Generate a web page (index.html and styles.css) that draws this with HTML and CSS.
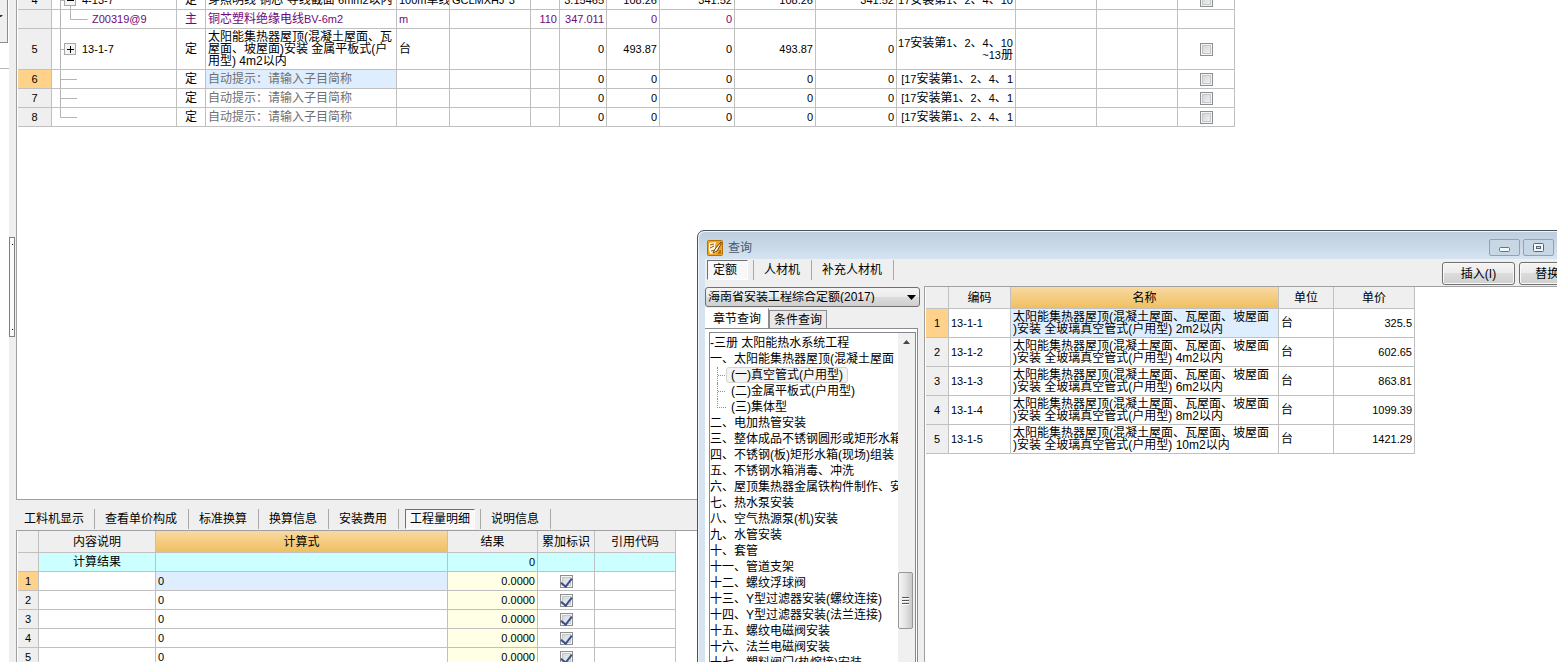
FILE: index.html
```html
<!DOCTYPE html>
<html lang="zh-CN">
<head>
<meta charset="utf-8">
<title>查询</title>
<link rel="stylesheet" href="styles.css">
</head>
<body>
<div class="app">
  <aside class="dock">
    <div class="dock-head"><svg width="3" height="4" viewBox="0 0 3 4"><path d="M0 1h3L1 3H0z" fill="#333"/></svg></div>
    <div class="dock-gap"></div>
  </aside>
  <div class="splitter"><div class="grip"><i></i><i></i></div></div>
  <main class="main">
    <section class="upper">
      <table class="grid items" aria-label="子目">
        <colgroup><col class="w34"><col class="w125"><col class="w29"><col class="w191"><col class="w53"><col class="w81"><col class="w29"><col class="w47"><col class="w53"><col class="w75"><col class="w81"><col class="w81"><col class="w119"><col class="w81"><col class="w81"><col class="w57"></colgroup>
        <tbody>
        <tr><th>4</th><td><div class="node"><svg width="30" height="18" viewBox="0 0 30 18"><path d="M8.500 0V18M9 9.500h4M18.500 15v3" class="ln"/><rect x="12.500" y="3.500" width="11" height="11" class="bx"/><path d="M15 9.500h7" class="sg"/></svg>4-13-7</div></td><td class="c">定</td><td class="l">穿照明线 铜芯 导线截面 <span class="n">6mm2</span>以内</td><td class="l"><span class="n">100m</span>单线</td><td class="l"><span class="n">GCLMXHJ*3</span></td><td></td><td>3.15465</td><td>108.26</td><td>341.52</td><td>108.26</td><td>341.52</td><td class="book"><span class="n">17</span>安装第<span class="n">1</span>、<span class="n">2</span>、<span class="n">4</span>、<span class="n">10</span></td><td></td><td></td><td class="c"><input type="checkbox" aria-label="选择 4"></td></tr>
        <tr class="mat"><th></th><td><div class="node"><svg width="40" height="18" viewBox="0 0 40 18"><path d="M8.500 0V18M18.500 0v9.500h17" class="ln"/></svg><span class="code">Z00319@9</span></div></td><td class="c">主</td><td class="l">铜芯塑料绝缘电线<span class="n">BV-6m2</span></td><td class="l"><span class="n">m</span></td><td></td><td>110</td><td>347.011</td><td>0</td><td>0</td><td></td><td></td><td></td><td></td><td></td><td></td></tr>
        <tr class="tall"><th>5</th><td><div class="node"><svg width="30" height="40" viewBox="0 0 30 40"><path d="M8.500 0V40M9 20.500h4" class="ln"/><rect x="12.500" y="14.500" width="11" height="11" class="bx"/><path d="M15 20.500h7M18.500 17v7" class="sg"/></svg>13-1-7</div></td><td class="c">定</td><td class="l">太阳能集热器屋顶(混凝土屋面、瓦<br>屋面、坡屋面)安装 金属平板式(户<br>用型) 4m2以内</td><td class="l">台</td><td></td><td></td><td>0</td><td>493.87</td><td>0</td><td>493.87</td><td>0</td><td class="book"><span class="n">17</span>安装第<span class="n">1</span>、<span class="n">2</span>、<span class="n">4</span>、<span class="n">10</span><br><span class="n">~13</span>册</td><td></td><td></td><td class="c"><input type="checkbox" aria-label="选择 5"></td></tr>
        <tr><th class="cur">6</th><td><div class="node"><svg width="30" height="18" viewBox="0 0 30 18"><path d="M8.500 0V18M9 9.500h16" class="ln"/></svg></div></td><td class="c">定</td><td class="l hint sel">自动提示：请输入子目简称</td><td></td><td></td><td></td><td>0</td><td>0</td><td>0</td><td>0</td><td>0</td><td class="book"><span class="n">[17</span>安装第<span class="n">1</span>、<span class="n">2</span>、<span class="n">4</span>、<span class="n">1</span></td><td></td><td></td><td class="c"><input type="checkbox" aria-label="选择 6"></td></tr>
        <tr><th>7</th><td><div class="node"><svg width="30" height="18" viewBox="0 0 30 18"><path d="M8.500 0V18M9 9.500h16" class="ln"/></svg></div></td><td class="c">定</td><td class="l hint">自动提示：请输入子目简称</td><td></td><td></td><td></td><td>0</td><td>0</td><td>0</td><td>0</td><td>0</td><td class="book"><span class="n">[17</span>安装第<span class="n">1</span>、<span class="n">2</span>、<span class="n">4</span>、<span class="n">1</span></td><td></td><td></td><td class="c"><input type="checkbox" aria-label="选择 7"></td></tr>
        <tr><th>8</th><td><div class="node"><svg width="30" height="18" viewBox="0 0 30 18"><path d="M8.500 0V9.500h16.500" class="ln"/></svg></div></td><td class="c">定</td><td class="l hint">自动提示：请输入子目简称</td><td></td><td></td><td></td><td>0</td><td>0</td><td>0</td><td>0</td><td>0</td><td class="book"><span class="n">[17</span>安装第<span class="n">1</span>、<span class="n">2</span>、<span class="n">4</span>、<span class="n">1</span></td><td></td><td></td><td class="c"><input type="checkbox" aria-label="选择 8"></td></tr>
        </tbody>
      </table>
    </section>
    <section class="lower">
      <nav class="tabs">
        <button>工料机显示</button><button>查看单价构成</button><button>标准换算</button><button>换算信息</button><button>安装费用</button><button class="on"><span>工程量明细</span></button><button>说明信息</button>
      </nav>
      <div class="lower-body">
      <table class="grid calc">
        <colgroup><col class="w21"><col class="w117"><col class="w292"><col class="w90"><col class="w57"><col class="w81"></colgroup>
        <thead><tr><th></th><th>内容说明</th><th class="hot">计算式</th><th>结果</th><th>累加标识</th><th>引用代码</th></tr></thead>
        <tbody>
        <tr class="sum"><th></th><td class="c">计算结果</td><td></td><td>0</td><td></td><td></td></tr>
        <tr><th class="cur">1</th><td></td><td class="l sel"><span class="n">0</span></td><td class="res">0.0000</td><td class="c"><input type="checkbox" checked aria-label="累加 1"></td><td></td></tr>
        <tr><th>2</th><td></td><td class="l"><span class="n">0</span></td><td class="res">0.0000</td><td class="c"><input type="checkbox" checked aria-label="累加 2"></td><td></td></tr>
        <tr><th>3</th><td></td><td class="l"><span class="n">0</span></td><td class="res">0.0000</td><td class="c"><input type="checkbox" checked aria-label="累加 3"></td><td></td></tr>
        <tr><th>4</th><td></td><td class="l"><span class="n">0</span></td><td class="res">0.0000</td><td class="c"><input type="checkbox" checked aria-label="累加 4"></td><td></td></tr>
        <tr><th>5</th><td></td><td class="l"><span class="n">0</span></td><td class="res">0.0000</td><td class="c"><input type="checkbox" checked aria-label="累加 5"></td><td></td></tr>
        </tbody>
      </table>
      </div>
    </section>
  </main>

  <div class="dialog" role="dialog" aria-label="查询">
    <header class="title">
      <svg class="logo" width="16" height="16" viewBox="0 0 16 16"><rect x=".5" y=".5" width="15" height="15" rx="1" fill="#f2a51c" stroke="#b4700c"/><path d="M2 3l7-1-1 4 1 7-6 1-1-4z" fill="#fff7dc"/><path d="M3 5l4-1M3 8l4-2M4 11l4-1" stroke="#8a5a10" fill="none"/><path d="M14 2L8 9l-2 4 4-2 4-7z" fill="#fff" stroke="#6b3c06"/><path d="M11 13h3M12 11h2" stroke="#7a4508"/></svg>
      <h1>查询</h1>
      <div class="winbtns">
        <button aria-label="最小化"><svg width="12" height="8" viewBox="0 0 12 8"><rect x=".5" y="3.500" width="10" height="4" rx="1" fill="#f4f7fa" stroke="#667382"/></svg></button>
        <button aria-label="最大化"><svg width="12" height="10" viewBox="0 0 12 10"><rect x=".5" y=".5" width="10" height="8" rx="1" fill="#f4f7fa" stroke="#566474"/><rect x="3.500" y="3.500" width="4" height="2" fill="#cfd9e4" stroke="#566474"/></svg></button>
        <button class="close" aria-label="关闭"></button>
      </div>
    </header>
    <div class="body">
      <div class="bar">
        <nav class="tabs top"><button class="on"><span>定额</span></button><button>人材机</button><button>补充人材机</button></nav>
        <div class="actions"><button>插入(I)</button><button>替换(R)</button></div>
      </div>
      <div class="cols">
        <div class="side">
          <div class="combo"><select aria-label="定额库"><option>海南省安装工程综合定额(2017)</option></select><svg width="9" height="5" viewBox="0 0 9 5"><path d="M0 0h9L4.500 5z"/></svg></div>
          <div class="pages"><button class="on">章节查询</button><button>条件查询</button></div>
          <div class="page">
            <div class="tree">
              <ul>
                <li>-三册 太阳能热水系统工程</li>
                <li>一、太阳能集热器屋顶(混凝土屋面
                  <ul>
                    <li><span class="picked">(一)真空管式(户用型)</span></li>
                    <li><span>(二)金属平板式(户用型)</span></li>
                    <li><span>(三)集体型</span></li>
                  </ul>
                </li>
                <li>二、电加热管安装</li>
                <li>三、整体成品不锈钢圆形或矩形水箱</li>
                <li>四、不锈钢(板)矩形水箱(现场)组装</li>
                <li>五、不锈钢水箱消毒、冲洗</li>
                <li>六、屋顶集热器金属铁构件制作、安</li>
                <li>七、热水泵安装</li>
                <li>八、空气热源泵(机)安装</li>
                <li>九、水管安装</li>
                <li>十、套管</li>
                <li>十一、管道支架</li>
                <li>十二、螺纹浮球阀</li>
                <li>十三、Y型过滤器安装(螺纹连接)</li>
                <li>十四、Y型过滤器安装(法兰连接)</li>
                <li>十五、螺纹电磁阀安装</li>
                <li>十六、法兰电磁阀安装</li>
                <li>十七、塑料阀门(热熔接)安装</li>
              </ul>
              <div class="scroll">
                <svg width="7" height="4" viewBox="0 0 7 4"><path d="M3.500 0L7 4H0z" fill="#444"/></svg>
                <div class="thumb"><i></i><i></i><i></i></div>
              </div>
            </div>
          </div>
        </div>
        <div class="result">
          <table class="grid quota">
            <colgroup><col class="w23"><col class="w62"><col class="w268"><col class="w55"><col class="w81"></colgroup>
            <thead><tr><th></th><th>编码</th><th class="hot">名称</th><th>单位</th><th>单价</th></tr></thead>
            <tbody>
            <tr><th class="cur">1</th><td class="l"><span class="n">13-1-1</span></td><td class="l sel">太阳能集热器屋顶(混凝土屋面、瓦屋面、坡屋面<br>)安装 全玻璃真空管式(户用型) 2m2以内</td><td class="l">台</td><td>325.5</td></tr>
            <tr><th>2</th><td class="l"><span class="n">13-1-2</span></td><td class="l">太阳能集热器屋顶(混凝土屋面、瓦屋面、坡屋面<br>)安装 全玻璃真空管式(户用型) 4m2以内</td><td class="l">台</td><td>602.65</td></tr>
            <tr><th>3</th><td class="l"><span class="n">13-1-3</span></td><td class="l">太阳能集热器屋顶(混凝土屋面、瓦屋面、坡屋面<br>)安装 全玻璃真空管式(户用型) 6m2以内</td><td class="l">台</td><td>863.81</td></tr>
            <tr><th>4</th><td class="l"><span class="n">13-1-4</span></td><td class="l">太阳能集热器屋顶(混凝土屋面、瓦屋面、坡屋面<br>)安装 全玻璃真空管式(户用型) 8m2以内</td><td class="l">台</td><td>1099.39</td></tr>
            <tr><th>5</th><td class="l"><span class="n">13-1-5</span></td><td class="l">太阳能集热器屋顶(混凝土屋面、瓦屋面、坡屋面<br>)安装 全玻璃真空管式(户用型) 10m2以内</td><td class="l">台</td><td>1421.29</td></tr>
            </tbody>
          </table>
        </div>
      </div>
    </div>
  </div>
</div>
</body>
</html>
```

FILE: styles.css
```css
* { box-sizing: border-box; }
body { margin: 0; }
body, button, select {
  font-family: "Liberation Sans", "Noto Sans CJK SC", sans-serif;
  font-size: 12px;
  line-height: 12px;
  color: #000;
}
button { margin: 0; padding: 0; border: 0; background: none; white-space: nowrap; }
ul { list-style: none; margin: 0; padding: 0; }
svg { display: block; flex: none; }

.app { position: relative; display: flex; height: 100vh; overflow: hidden; background: #fff; }

/* left dock and splitter */
.dock { flex: 0 0 9px; background: #fff; }
.dock-head { height: 43px; margin-right: 1px; padding-top: 14px; background: #efefef; border: solid #8c8c8c; border-width: 0 1px 1px 0; }
.dock-gap { height: 26px; border-bottom: 1px solid #b8b8b8; }
.splitter { flex: 0 0 7px; padding-top: 237px; background: #efefef; }
.grip { display: flex; flex-direction: column; justify-content: space-between; height: 100px; width: 6px; padding: 6px 2px; border: 1px solid #808080; background: #fafafa; }
.grip i { width: 1px; height: 1px; background: #000; }

.main { flex: 1; min-width: 0; display: flex; flex-direction: column; }
.upper { flex: 1; min-height: 0; overflow: hidden; padding-left: 1px; border: solid #a0a0a0; border-width: 0 0 1px 1px; }
.items { margin-top: -9px; }
.lower { flex: 0 0 162px; overflow: hidden; display: flex; flex-direction: column; background: #efefef; }
.lower-body { flex: 1; min-height: 0; overflow: hidden; padding-left: 1px; border: solid #a0a0a0; border-width: 1px 0 0 1px; background: #fff; }

/* grids */
.grid { border-collapse: separate; border-spacing: 0; table-layout: fixed; width: 1px; }
.grid td, .grid th { height: 19px; padding: 0 2px; border: solid #c0c0c0; border-width: 0 1px 1px 0; font-weight: normal; white-space: nowrap; overflow: hidden; }
.grid td { text-align: right; font-size: 11px; }
.grid td.l { text-align: left; font-size: 12px; }
.grid td.c { text-align: center; font-size: 12px; }
.grid th { background: #efefef; text-align: center; }
.grid tbody th { font-size: 11px; }
.grid thead th { height: 22px; }
.grid thead th.hot { background: linear-gradient(#f8d9a2, #f0c060); }
.grid tbody th.cur { background: #ffd28c; }
.grid td.sel { background: #dfeeff; }
.grid td.hint { color: #707070; }
.grid td.res { background: #ffffe6; }
.grid td.book { font-size: 12px; padding: 0 2px 0 1px; }
.grid .tall td, .grid .tall th { height: 41px; }
.grid .mat td { color: #6e0a78; }
.grid .sum td { background: #ccffff; }
.quota tbody td, .quota tbody th { height: 29px; }
.grid.items td:nth-child(2) { padding: 0; }
.n { font-size: 11px; }
.node { display: flex; align-items: center; font-size: 11px; }
.ln { fill: none; stroke: #b4b4b4; }
.bx { fill: #f4f4f4; stroke: #a8a8a8; }
.sg { stroke: #000; }
.w21 { width: 21px; } .w23 { width: 23px; } .w29 { width: 29px; } .w34 { width: 34px; }
.w47 { width: 47px; } .w53 { width: 53px; } .w55 { width: 55px; } .w57 { width: 57px; }
.w62 { width: 62px; } .w75 { width: 75px; } .w81 { width: 81px; } .w90 { width: 90px; }
.w117 { width: 117px; } .w119 { width: 119px; } .w125 { width: 125px; } .w191 { width: 191px; }
.w268 { width: 268px; } .w292 { width: 292px; }

input[type="checkbox"] { appearance: none; display: grid; place-items: start center; width: 13px; height: 13px; margin: 0 auto; border: 1px solid #8e8f8f; background: linear-gradient(135deg, #cfd1d3, #f6f6f6); box-shadow: inset 0 0 0 1px #f4f4f4, inset 0 0 0 2px #c4c8cc; }
input[type="checkbox"]:checked::after { content: ""; width: 5px; height: 9px; border: solid #3d4f8f; border-width: 0 2px 2px 0; transform: rotate(38deg); }

/* flat tabs */
.tabs { display: flex; align-items: center; height: 30px; padding-top: 7px; }
.tabs button { height: 20px; padding: 0 11px 0 10px; border-right: 1px solid #a8a8a8; }
.tabs button:first-child { padding: 0 10px 0 8px; }
.tabs .on { padding: 0 5px 0 6px; }
.tabs .on span { display: block; height: 20px; padding: 3px 4px 0; border: 1px solid; border-color: #707070 #fff #fff #707070; background: #f8f8f8; }

/* query window */
.dialog { position: absolute; left: 697px; right: -48px; top: 230px; bottom: -8px; display: flex; flex-direction: column; padding: 0 7px; border: 1px solid #4a545f; border-radius: 7px 7px 0 0; background: linear-gradient(#bccddd, #d6e3f0 28px, #d6e3f0); box-shadow: inset 1px 1px 0 #edf3f9; }
.title { display: flex; align-items: center; gap: 5px; height: 28px; padding: 5px 0 0 2px; }
.title h1 { flex: 1; margin: 0; font-size: 12px; font-weight: normal; color: #44586c; }
.winbtns { display: flex; gap: 3px; }
.winbtns button { display: flex; align-items: center; justify-content: center; width: 31px; height: 17px; border: 1px solid #8fa3b8; border-radius: 2px; background: #c8d7e6; }
.winbtns button.close { width: 40px; border-color: #5a6e88; }
.body { flex: 1; min-height: 0; display: flex; flex-direction: column; background: #efefef; }
.bar { display: flex; justify-content: space-between; height: 27px; }
.tabs.top { height: 27px; padding: 0 0 5px 2px; }
.tabs.top .on { padding: 0 5px 0 0; }
.tabs.top .on span { width: 41px; text-align: left; padding-left: 5px; }
.actions { display: flex; gap: 4px; padding: 3px 5px 0 0; }
.actions button { width: 73px; height: 23px; border: 1px solid #707070; border-radius: 3px; background: linear-gradient(#f4f4f4, #ebebeb 50%, #dcdcdc 50%, #cfcfcf); box-shadow: inset 0 0 0 1px #fafafa; }
.cols { flex: 1; min-height: 0; display: flex; gap: 4px; }
.side { flex: 0 0 215px; min-width: 0; display: flex; flex-direction: column; padding-top: 1px; }
.combo { position: relative; }
.combo select { display: block; appearance: none; width: 100%; height: 20px; padding: 0 2px; border: 1px solid #707070; border-radius: 3px; background: linear-gradient(#f4f4f4, #ebebeb 50%, #dcdcdc 50%, #cfcfcf); }
.combo svg { position: absolute; right: 4px; top: 8px; }
.pages { display: flex; align-items: flex-end; height: 21px; padding-top: 1px; }
.pages button { height: 18px; padding: 0 4px; border: 1px solid #8c8c8c; border-bottom: 0; background: #e8e8e8; }
.pages .on { height: 20px; padding: 0 7px; border-color: #fff; border-right-color: #8c8c8c; background: #fff; }
.page { flex: 1; min-height: 0; min-width: 0; display: flex; margin-right: 2px; padding: 3px 1px 0 4px; background: #fff; border-top: 1px solid #8c8c8c; border-right: 1px solid #8c8c8c; }
.tree { flex: 1; min-width: 0; display: flex; overflow: hidden; border: 1px solid #828790; border-bottom: 0; }
.tree > ul { flex: 1; min-width: 0; overflow: hidden; padding-top: 2px; }
.tree li { line-height: 16px; white-space: nowrap; }
.tree li ul { margin-left: 7px; }
.tree li li { display: flex; height: 16px; }
.tree li li::before { content: ""; width: 8px; height: 8px; border: dotted #909090; border-width: 0 0 1px 1px; }
.tree li li:not(:last-child)::before { height: 16px; border-bottom: 0; background: linear-gradient(90deg, #909090 50%, transparent 50%) 0 8px / 2px 1px repeat-x; }
.tree li span { height: 16px; padding: 0 5px; line-height: 16px; }
.tree .picked { padding: 0 4px; line-height: 14px; border: 1px solid #d4d4d4; border-radius: 3px; background: #f3f3f3; }
.scroll { flex: 0 0 17px; padding-top: 7px; background: #f0f0f0; }
.scroll svg { margin: 0 auto 228px 5px; }
.thumb { display: flex; flex-direction: column; align-items: center; justify-content: center; gap: 1px; width: 15px; height: 57px; border: 1px solid #979797; border-radius: 2px; background: linear-gradient(90deg, #f5f5f5, #e3e3e3 50%, #c8c8c8); }
.thumb i { width: 7px; height: 2px; border-top: 1px solid #555; background: #fff; }
.result { flex: 1; min-width: 0; overflow: hidden; padding-left: 1px; border: solid #a0a0a0; border-width: 1px 0 0 1px; background: #fff; }
```
